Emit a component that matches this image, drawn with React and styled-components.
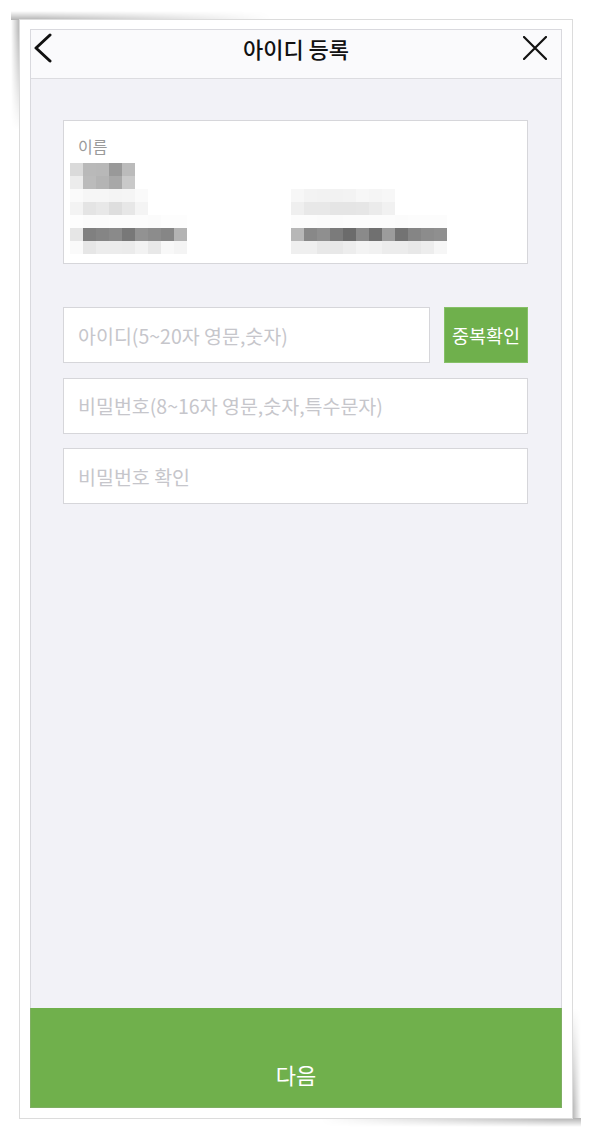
import React from "react";
import styled, { createGlobalStyle } from "styled-components";

const GlobalStyle = createGlobalStyle`
  * { box-sizing: border-box; }
  body {
    margin: 0;
    background: #ffffff;
    font-family: "Noto Sans CJK KR", "Noto Sans", sans-serif;
  }
`;

const Page = styled.div`
  padding: 19px;
`;

const Frame = styled.div`
  position: relative;
  width: 554px;
  height: 1100px;
  padding: 9px 10px 10px;
  background: #ffffff;
  border: 1px solid #dcdcdc;
`;

// curled-page shadow strips that peek out behind the frame corners
const ShadowStrip = styled.div`
  position: absolute;
  z-index: -1;
  ${(p) =>
    p.$side === "top" &&
    `top: -9px; left: -9px; width: 260px; height: 9px;
     background: linear-gradient(to top, rgba(0,0,0,0.3), rgba(0,0,0,0));
     -webkit-mask-image: linear-gradient(to right, #000 10%, transparent);
     mask-image: linear-gradient(to right, #000 10%, transparent);`}
  ${(p) =>
    p.$side === "left" &&
    `top: 0; left: -9px; width: 9px; height: 110px;
     background: linear-gradient(to left, rgba(0,0,0,0.3), rgba(0,0,0,0));
     -webkit-mask-image: linear-gradient(to bottom, #000 10%, transparent);
     mask-image: linear-gradient(to bottom, #000 10%, transparent);`}
  ${(p) =>
    p.$side === "bottom" &&
    `bottom: -9px; right: -9px; width: 260px; height: 9px;
     background: linear-gradient(to bottom, rgba(0,0,0,0.3), rgba(0,0,0,0));
     -webkit-mask-image: linear-gradient(to left, #000 10%, transparent);
     mask-image: linear-gradient(to left, #000 10%, transparent);`}
  ${(p) =>
    p.$side === "right" &&
    `bottom: 0; right: -9px; width: 9px; height: 110px;
     background: linear-gradient(to right, rgba(0,0,0,0.3), rgba(0,0,0,0));
     -webkit-mask-image: linear-gradient(to top, #000 10%, transparent);
     mask-image: linear-gradient(to top, #000 10%, transparent);`}
`;

const Screen = styled.div`
  display: flex;
  flex-direction: column;
  height: 100%;
  border: 1px solid #d9d9de;
  background: #f2f2f7;
`;

const Header = styled.div`
  display: grid;
  grid-template-columns: 1fr auto 1fr;
  align-items: center;
  height: 49px;
  padding: 0 2px 13px;
  background: #fafafc;
  border-bottom: 1px solid #dcdce0;
`;

const Title = styled.div`
  font-size: 22px;
  font-weight: 500;
  color: #111111;
`;

const IconButton = styled.div`
  display: flex;
  height: 28px;
  align-items: center;
  justify-self: ${(p) => (p.$end ? "end" : "start")};
  margin-right: ${(p) => (p.$end ? "12px" : "0")};
`;

const Body = styled.div`
  flex: 1;
  padding: 41px 33px 0 32px;
`;

const InfoCard = styled.div`
  height: 144px;
  padding: 14px 0 0 6px;
  background: #ffffff;
  border: 1px solid #d6d6da;
`;

const Label = styled.div`
  padding-left: 8px;
  font-size: 16px;
  line-height: 22px;
  color: #9a9a9a;
`;

const MosaicGrid = styled.div`
  display: grid;
  grid-template-columns: 221px 1fr;
  margin-top: 6px;
`;

const Mosaic = styled.div`
  display: flex;
  flex-direction: column;
`;

const MosaicRow = styled.div`
  display: flex;
  height: 13px;
`;

const Cell = styled.div`
  width: 13px;
  height: 100%;
`;

const Form = styled.div`
  display: flex;
  flex-direction: column;
  gap: 14.5px;
  margin-top: 43px;
`;

const Row = styled.div`
  display: flex;
  gap: 14px;
`;

const Field = styled.div`
  flex: 1;
  display: flex;
  align-items: center;
  height: 56px;
  padding-left: 14px;
  background: #ffffff;
  border: 1px solid #d6d6da;
  font-size: 19.5px;
  color: #c6c6cb;
`;

const CheckButton = styled.div`
  display: flex;
  align-items: center;
  justify-content: center;
  width: 84px;
  height: 56px;
  background: #6fb04c;
  border: 1px solid #86c067;
  color: #ffffff;
  font-size: 18.5px;
`;

const NextButton = styled.div`
  display: flex;
  justify-content: center;
  height: 100px;
  padding-top: 50px;
  background: #70b04c;
  color: #ffffff;
  font-size: 22px;
  line-height: 32px;
  margin: 0 -1px -1px;
  border: 1px solid #7fae63;
  border-top: none;
`;

const g = (v) => `#${v}${v}${v}`;

const nameBlock = [
  ["da", "b9", "b8", "99", "bb"],
  ["ec", "bb", "b4", "a8", "c9"],
];

const leftBlock = [
  ["fa", "f6", "f6", "f4", "f5", "fa"],
  ["f3", "e4", "e8", "de", "e7", "f4"],
  ["fd", "fb", "fb", "fc", "fc", "fc", "fb", "fd", "fd"],
  ["e6", "80", "85", "8a", "78", "92", "8c", "86", "b3"],
  ["fa", "e6", "ec", "ec", "eb", "f2", "e8", "f8", "f4"],
];

const rightBlock = [
  ["f7", "f3", "f2", "f2", "f3", "f7", "f5", "f7"],
  ["ef", "e8", "e8", "e5", "e5", "e6", "eb", "f1"],
  ["fc", "fc", "fb", "fb", "fc", "fc", "fc", "fc", "fb", "fc", "fc", "fc"],
  ["b7", "88", "8f", "7b", "6b", "8a", "70", "9c", "73", "85", "8c", "8f"],
  ["ef", "ef", "e8", "e8", "ed", "f3", "f1", "ec", "ec", "e8", "ed", "f6"],
];

const MosaicBlock = ({ rows }) => (
  <Mosaic>
    {rows.map((r, i) => (
      <MosaicRow key={i}>
        {r.map((c, j) => (
          <Cell key={j} style={{ background: g(c) }} />
        ))}
      </MosaicRow>
    ))}
  </Mosaic>
);

const BackIcon = () => (
  <svg width="20" height="30" viewBox="0 0 20 30">
    <path d="M17 2 L3 15 L17 28" fill="none" stroke="#111" strokeWidth="3" strokeLinecap="round" strokeLinejoin="round" />
  </svg>
);

const CloseIcon = () => (
  <svg width="24" height="24" viewBox="0 0 24 24">
    <path d="M1 1 L23 23 M23 1 L1 23" stroke="#111" strokeWidth="2.2" strokeLinecap="round" />
  </svg>
);

const App = () => {
  return (
    <Page>
      <GlobalStyle />
      <Frame>
        <ShadowStrip $side="top" />
        <ShadowStrip $side="left" />
        <ShadowStrip $side="bottom" />
        <ShadowStrip $side="right" />
        <Screen>
          <Header>
            <IconButton>
              <BackIcon />
            </IconButton>
            <Title>아이디 등록</Title>
            <IconButton $end>
              <CloseIcon />
            </IconButton>
          </Header>
          <Body>
            <InfoCard>
              <Label>이름</Label>
              <MosaicGrid>
                <MosaicBlock rows={nameBlock} />
                <div />
                <MosaicBlock rows={leftBlock} />
                <MosaicBlock rows={rightBlock} />
              </MosaicGrid>
            </InfoCard>
            <Form>
              <Row>
                <Field>아이디(5~20자 영문,숫자)</Field>
                <CheckButton>중복확인</CheckButton>
              </Row>
              <Row>
                <Field>비밀번호(8~16자 영문,숫자,특수문자)</Field>
              </Row>
              <Row>
                <Field>비밀번호 확인</Field>
              </Row>
            </Form>
          </Body>
          <NextButton>다음</NextButton>
        </Screen>
      </Frame>
    </Page>
  );
};

export default App;
